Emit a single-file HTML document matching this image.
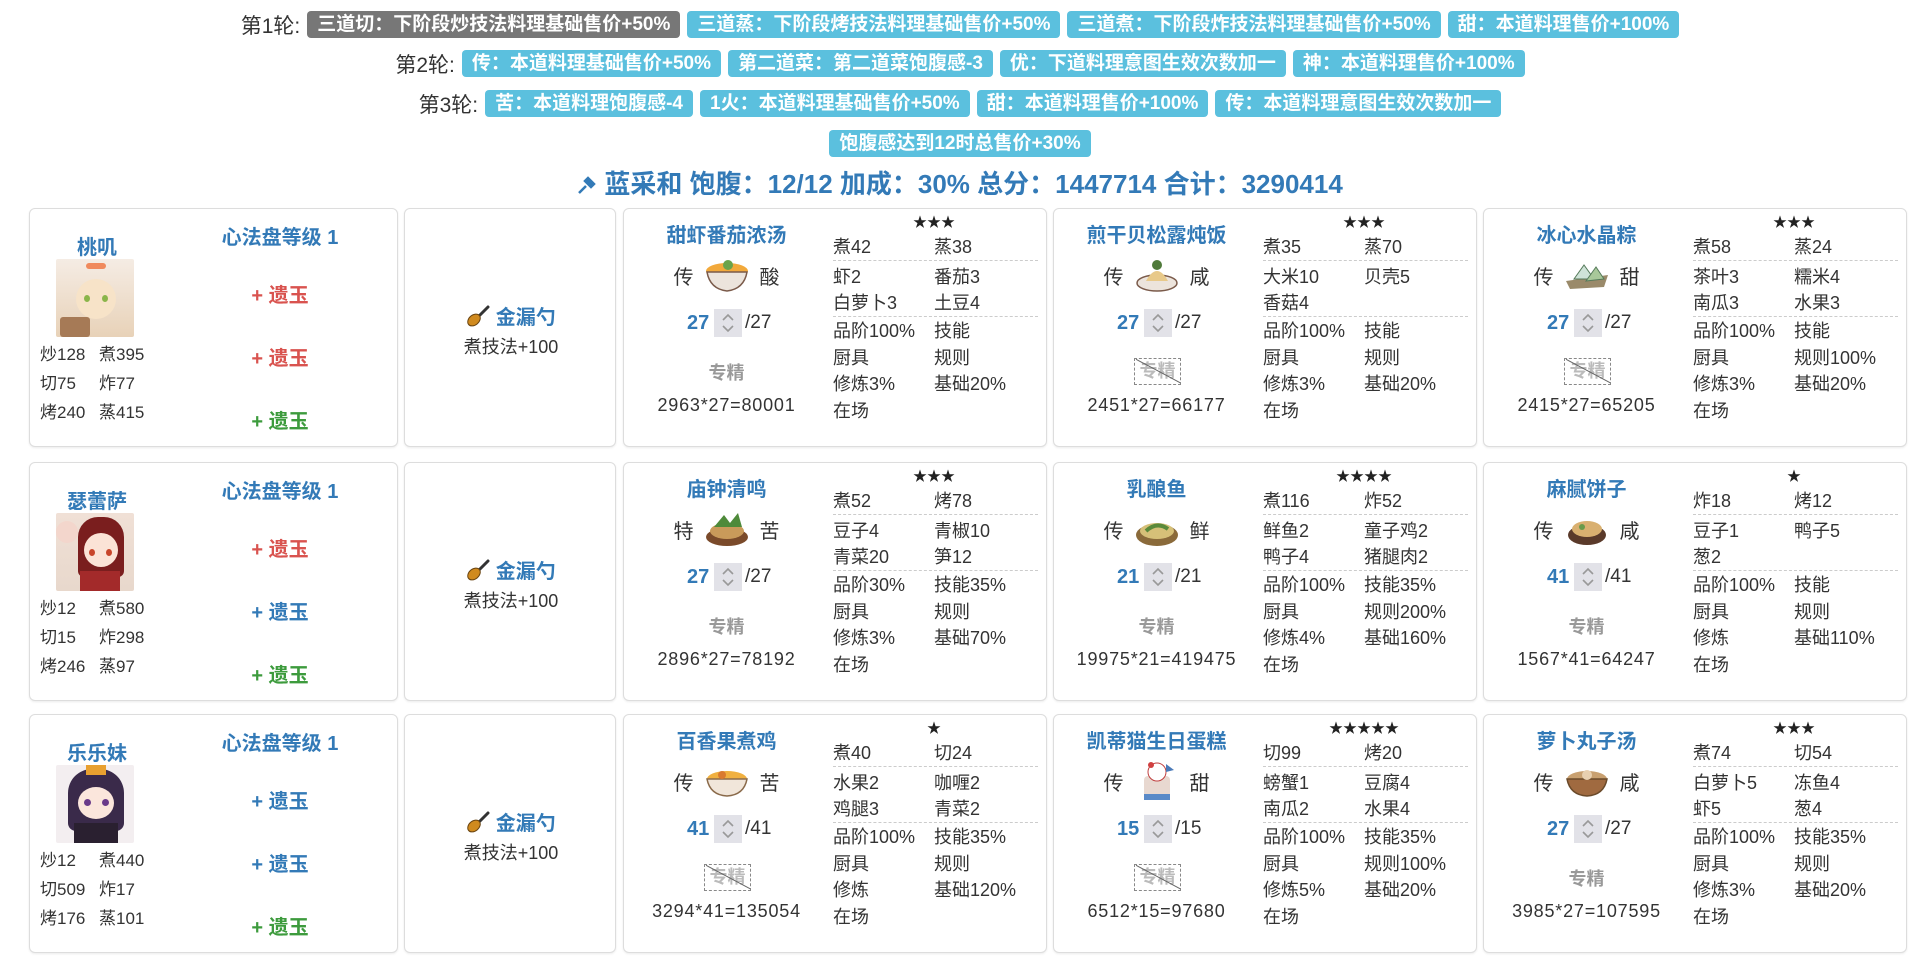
<!DOCTYPE html>
<html><head><meta charset="utf-8">
<style>
*{box-sizing:border-box;margin:0;padding:0}
body{width:1920px;height:970px;background:#fff;font-family:"Liberation Sans","Noto Sans CJK SC",sans-serif;color:#333;position:relative;overflow:hidden}
.tr{position:absolute;left:0;width:1920px;display:flex;justify-content:center;align-items:center;gap:7px;height:27px}
.lb{font-size:21px;color:#333}
.tg{background:#5bc0de;color:#fff;font-weight:bold;font-size:19px;height:27px;line-height:27px;padding:0 10px;border-radius:4px;white-space:nowrap}
.tg.g{background:#777}
.ttl{position:absolute;top:168px;left:0;width:1920px;text-align:center;font-size:26px;font-weight:bold;color:#337ab7;line-height:32px}
.card{position:absolute;border:1px solid #ddd;border-radius:6px;box-shadow:0 1px 2px rgba(0,0,0,.08);background:#fff}
.ch{width:369px;height:239px}
.eq{width:212px;height:239px}
.dc{width:424px;height:239px}
.a{position:absolute;white-space:nowrap}
.nm{font-size:20px;font-weight:bold;color:#337ab7;width:134px;text-align:center;left:0;top:20px}
.av{left:26px;top:50px;width:78px;height:78px;border-radius:2px}
.s{font-size:17px;line-height:22px}
.xf{left:150px;width:200px;text-align:center;font-size:20px;font-weight:bold;color:#337ab7;top:12px}
.yy{left:150px;width:200px;text-align:center;font-size:20px;font-weight:bold}
.r{color:#d9534f}.b{color:#337ab7}.gr{color:#3d9b3d}
.en{left:0;width:212px;text-align:center;top:92px;font-size:20px;font-weight:bold;color:#337ab7}
.ed{left:0;width:212px;text-align:center;top:124px;font-size:18px}
.dt{left:0;width:205px;text-align:center;top:10px;font-size:20px;font-weight:bold;color:#337ab7}
.fl{left:0;width:205px;top:44px;display:flex;justify-content:center;align-items:center;gap:10px;font-size:20px;height:44px}
.ct{left:63px;top:100px;display:flex;align-items:center;font-size:19px;height:28px}
.ct b{color:#337ab7;font-size:20px;width:27px}
.sp{width:28px;height:28px;background:#e2e2e8;margin-right:3px;display:flex;align-items:center;justify-content:center}
.zj{left:0;width:205px;text-align:center;top:150px;font-size:18px;font-weight:bold;color:#999}
.zx{left:80px;top:149px;width:47px;height:27px;border:1px dashed #888;font-size:18px;font-weight:bold;color:#bbb;text-align:center;line-height:25px;overflow:hidden}
.zx:after{content:"";position:absolute;left:-2px;top:12px;width:52px;border-top:1px solid #666;transform:rotate(28deg)}
.fm{left:0;width:205px;text-align:center;top:186px;font-size:18px;letter-spacing:0.8px}
.st{left:250px;width:120px;text-align:center;top:3px;font-size:14px;color:#222}
.c{font-size:18px;line-height:24px}
.c1{left:209px}.c2{left:310px}
.hl{position:absolute;left:209px;width:205px;border-top:1px dashed #ccc}
</style></head><body>

<div class="tr" style="top:11px"><span class="lb">第1轮:</span><span class="tg g">三道切：下阶段炒技法料理基础售价+50%</span><span class="tg">三道蒸：下阶段烤技法料理基础售价+50%</span><span class="tg">三道煮：下阶段炸技法料理基础售价+50%</span><span class="tg">甜：本道料理售价+100%</span></div>
<div class="tr" style="top:50px"><span class="lb">第2轮:</span><span class="tg">传：本道料理基础售价+50%</span><span class="tg">第二道菜：第二道菜饱腹感-3</span><span class="tg">优：下道料理意图生效次数加一</span><span class="tg">神：本道料理售价+100%</span></div>
<div class="tr" style="top:90px"><span class="lb">第3轮:</span><span class="tg">苦：本道料理饱腹感-4</span><span class="tg">1火：本道料理基础售价+50%</span><span class="tg">甜：本道料理售价+100%</span><span class="tg">传：本道料理意图生效次数加一</span></div>
<div class="tr" style="top:130px"><span class="tg">饱腹感达到12时总售价+30%</span></div>
<div class="ttl"><svg width="20" height="20" viewBox="0 0 20 20" style="vertical-align:-2px"><path d="M2 18 L9 11 M8 6 L14 12 M11 3 L17 9 L14 12 L8 6 Z" stroke="#337ab7" stroke-width="2.5" fill="#337ab7"/></svg> 蓝采和 饱腹：12/12 加成：30% 总分：1447714 合计：3290414</div>

<!-- ROW 1 -->
<div class="card ch" style="left:29px;top:208px">
<div class="a nm" style="top:22px">桃叽</div>
<div class="a av" style="background:linear-gradient(#f5ece4,#e8d2b8);"><div style="position:absolute;left:20px;top:20px;width:40px;height:40px;border-radius:50%;background:#f7e3c8"></div><div style="position:absolute;left:28px;top:36px;width:6px;height:7px;border-radius:50%;background:#8ab54a"></div><div style="position:absolute;left:46px;top:36px;width:6px;height:7px;border-radius:50%;background:#8ab54a"></div><div style="position:absolute;left:30px;top:4px;width:20px;height:6px;background:#f08a5d;border-radius:3px"></div><div style="position:absolute;left:4px;top:58px;width:30px;height:20px;background:#a67a56;border-radius:3px"></div></div>
<div class="a s" style="left:10px;top:135px">炒128</div><div class="a s" style="left:69px;top:135px">煮395</div>
<div class="a s" style="left:10px;top:164px">切75</div><div class="a s" style="left:69px;top:164px">炸77</div>
<div class="a s" style="left:10px;top:193px">烤240</div><div class="a s" style="left:69px;top:193px">蒸415</div>
<div class="a xf">心法盘等级 1</div>
<div class="a yy r" style="top:70px">+ 遗玉</div>
<div class="a yy r" style="top:133px">+ 遗玉</div>
<div class="a yy gr" style="top:196px">+ 遗玉</div>
</div>
<div class="card eq" style="left:404px;top:208px"><div class="a en"><svg width="24" height="22" viewBox="0 0 24 22" style="vertical-align:-3px"><path d="M22 2 L12 12" stroke="#333" stroke-width="3" stroke-linecap="round"/><ellipse cx="8" cy="15" rx="7" ry="5" transform="rotate(-40 8 15)" fill="#d08a1e" stroke="#6a4410"/></svg> 金漏勺</div><div class="a ed">煮技法+100</div></div>

<div class="card dc" style="left:623px;top:208px">
<div class="a dt">甜虾番茄浓汤</div>
<div class="a fl">传<svg width="46" height="40"><ellipse cx="23" cy="16" rx="21" ry="8" fill="#f2a93b"/><path d="M3 17 Q6 34 23 36 Q40 34 43 17 Z" fill="#ece4dc" stroke="#7a5a4a" stroke-width="1.5"/><circle cx="24" cy="10" r="5" fill="#6aa34a"/></svg>酸</div>
<div class="a ct"><b>27</b><span class="sp"><svg width="14" height="22"><path d="M2 8 L7 3 L12 8 M2 14 L7 19 L12 14" fill="none" stroke="#999" stroke-width="1.6"/></svg></span>/27</div>
<div class="a zj">专精</div>
<div class="a fm">2963*27=80001</div>
<div class="a st">★★★</div>
<div class="a c c1" style="top:26px">煮42</div><div class="a c c2" style="top:26px">蒸38</div>
<div class="hl" style="top:51px"></div>
<div class="a c c1" style="top:56px">虾2</div><div class="a c c2" style="top:56px">番茄3</div>
<div class="a c c1" style="top:82px">白萝卜3</div><div class="a c c2" style="top:82px">土豆4</div>
<div class="hl" style="top:107px"></div>
<div class="a c c1" style="top:110px">品阶100%</div><div class="a c c2" style="top:110px">技能</div>
<div class="a c c1" style="top:137px">厨具</div><div class="a c c2" style="top:137px">规则</div>
<div class="a c c1" style="top:163px">修炼3%</div><div class="a c c2" style="top:163px">基础20%</div>
<div class="a c c1" style="top:190px">在场</div>
</div>

<div class="card dc" style="left:1053px;top:208px">
<div class="a dt">煎干贝松露炖饭</div>
<div class="a fl">传<svg width="46" height="40"><ellipse cx="23" cy="28" rx="20" ry="8" fill="#ece4dc" stroke="#7a5a4a" stroke-width="1.5"/><path d="M12 26 Q23 6 34 26 Z" fill="#e8c98a"/><circle cx="23" cy="10" r="5" fill="#4f7a3a"/></svg>咸</div>
<div class="a ct"><b>27</b><span class="sp"><svg width="14" height="22"><path d="M2 8 L7 3 L12 8 M2 14 L7 19 L12 14" fill="none" stroke="#999" stroke-width="1.6"/></svg></span>/27</div>
<div class="a zx">专精</div>
<div class="a fm">2451*27=66177</div>
<div class="a st">★★★</div>
<div class="a c c1" style="top:26px">煮35</div><div class="a c c2" style="top:26px">蒸70</div>
<div class="hl" style="top:51px"></div>
<div class="a c c1" style="top:56px">大米10</div><div class="a c c2" style="top:56px">贝壳5</div>
<div class="a c c1" style="top:82px">香菇4</div>
<div class="hl" style="top:107px"></div>
<div class="a c c1" style="top:110px">品阶100%</div><div class="a c c2" style="top:110px">技能</div>
<div class="a c c1" style="top:137px">厨具</div><div class="a c c2" style="top:137px">规则</div>
<div class="a c c1" style="top:163px">修炼3%</div><div class="a c c2" style="top:163px">基础20%</div>
<div class="a c c1" style="top:190px">在场</div>
</div>

<div class="card dc" style="left:1483px;top:208px">
<div class="a dt">冰心水晶粽</div>
<div class="a fl">传<svg width="46" height="40"><path d="M2 26 L44 20 L40 32 L6 34 Z" fill="#9a8a6a"/><path d="M10 24 L20 10 L30 24 Z" fill="#cfe3d8" stroke="#557a5a"/><path d="M22 26 L32 12 L40 24 Z" fill="#a8c89a" stroke="#557a5a"/></svg>甜</div>
<div class="a ct"><b>27</b><span class="sp"><svg width="14" height="22"><path d="M2 8 L7 3 L12 8 M2 14 L7 19 L12 14" fill="none" stroke="#999" stroke-width="1.6"/></svg></span>/27</div>
<div class="a zx">专精</div>
<div class="a fm">2415*27=65205</div>
<div class="a st">★★★</div>
<div class="a c c1" style="top:26px">煮58</div><div class="a c c2" style="top:26px">蒸24</div>
<div class="hl" style="top:51px"></div>
<div class="a c c1" style="top:56px">茶叶3</div><div class="a c c2" style="top:56px">糯米4</div>
<div class="a c c1" style="top:82px">南瓜3</div><div class="a c c2" style="top:82px">水果3</div>
<div class="hl" style="top:107px"></div>
<div class="a c c1" style="top:110px">品阶100%</div><div class="a c c2" style="top:110px">技能</div>
<div class="a c c1" style="top:137px">厨具</div><div class="a c c2" style="top:137px">规则100%</div>
<div class="a c c1" style="top:163px">修炼3%</div><div class="a c c2" style="top:163px">基础20%</div>
<div class="a c c1" style="top:190px">在场</div>
</div>

<!-- ROW 2 -->
<div class="card ch" style="left:29px;top:462px">
<div class="a nm" style="top:22px">瑟蕾萨</div>
<div class="a av" style="background:linear-gradient(#f0e0d6,#e8d8cc)"><div style="position:absolute;left:22px;top:4px;width:46px;height:60px;border-radius:20px 20px 6px 6px;background:#7a1e1e"></div><div style="position:absolute;left:28px;top:20px;width:34px;height:34px;border-radius:50%;background:#fbe3d6"></div><div style="position:absolute;left:33px;top:36px;width:6px;height:7px;border-radius:50%;background:#c8452a"></div><div style="position:absolute;left:50px;top:36px;width:6px;height:7px;border-radius:50%;background:#c8452a"></div><div style="position:absolute;left:24px;top:58px;width:40px;height:20px;background:#a32a2a"></div><div style="position:absolute;left:0;top:8px;width:22px;height:22px;border-radius:50%;background:#f3d6cc"></div></div>
<div class="a s" style="left:10px;top:135px">炒12</div><div class="a s" style="left:69px;top:135px">煮580</div>
<div class="a s" style="left:10px;top:164px">切15</div><div class="a s" style="left:69px;top:164px">炸298</div>
<div class="a s" style="left:10px;top:193px">烤246</div><div class="a s" style="left:69px;top:193px">蒸97</div>
<div class="a xf">心法盘等级 1</div>
<div class="a yy r" style="top:70px">+ 遗玉</div>
<div class="a yy b" style="top:133px">+ 遗玉</div>
<div class="a yy gr" style="top:196px">+ 遗玉</div>
</div>
<div class="card eq" style="left:404px;top:462px"><div class="a en"><svg width="24" height="22" viewBox="0 0 24 22" style="vertical-align:-3px"><path d="M22 2 L12 12" stroke="#333" stroke-width="3" stroke-linecap="round"/><ellipse cx="8" cy="15" rx="7" ry="5" transform="rotate(-40 8 15)" fill="#d08a1e" stroke="#6a4410"/></svg> 金漏勺</div><div class="a ed">煮技法+100</div></div>

<div class="card dc" style="left:623px;top:462px">
<div class="a dt">庙钟清鸣</div>
<div class="a fl">特<svg width="46" height="40"><ellipse cx="23" cy="28" rx="21" ry="9" fill="#7a4a2a"/><ellipse cx="23" cy="22" rx="17" ry="8" fill="#c99a5a"/><path d="M10 18 L20 6 L26 14 L34 4 L38 18 Z" fill="#4e8a3a"/></svg>苦</div>
<div class="a ct"><b>27</b><span class="sp"><svg width="14" height="22"><path d="M2 8 L7 3 L12 8 M2 14 L7 19 L12 14" fill="none" stroke="#999" stroke-width="1.6"/></svg></span>/27</div>
<div class="a zj">专精</div>
<div class="a fm">2896*27=78192</div>
<div class="a st">★★★</div>
<div class="a c c1" style="top:26px">煮52</div><div class="a c c2" style="top:26px">烤78</div>
<div class="hl" style="top:51px"></div>
<div class="a c c1" style="top:56px">豆子4</div><div class="a c c2" style="top:56px">青椒10</div>
<div class="a c c1" style="top:82px">青菜20</div><div class="a c c2" style="top:82px">笋12</div>
<div class="hl" style="top:107px"></div>
<div class="a c c1" style="top:110px">品阶30%</div><div class="a c c2" style="top:110px">技能35%</div>
<div class="a c c1" style="top:137px">厨具</div><div class="a c c2" style="top:137px">规则</div>
<div class="a c c1" style="top:163px">修炼3%</div><div class="a c c2" style="top:163px">基础70%</div>
<div class="a c c1" style="top:190px">在场</div>
</div>

<div class="card dc" style="left:1053px;top:462px">
<div class="a dt">乳酿鱼</div>
<div class="a fl">传<svg width="46" height="40"><ellipse cx="23" cy="26" rx="21" ry="11" fill="#8a6a3a"/><ellipse cx="23" cy="22" rx="17" ry="8" fill="#d6c078"/><path d="M12 22 Q23 12 34 20" stroke="#5a8a3a" stroke-width="4" fill="none"/></svg>鲜</div>
<div class="a ct"><b>21</b><span class="sp"><svg width="14" height="22"><path d="M2 8 L7 3 L12 8 M2 14 L7 19 L12 14" fill="none" stroke="#999" stroke-width="1.6"/></svg></span>/21</div>
<div class="a zj">专精</div>
<div class="a fm">19975*21=419475</div>
<div class="a st">★★★★</div>
<div class="a c c1" style="top:26px">煮116</div><div class="a c c2" style="top:26px">炸52</div>
<div class="hl" style="top:51px"></div>
<div class="a c c1" style="top:56px">鲜鱼2</div><div class="a c c2" style="top:56px">童子鸡2</div>
<div class="a c c1" style="top:82px">鸭子4</div><div class="a c c2" style="top:82px">猪腿肉2</div>
<div class="hl" style="top:107px"></div>
<div class="a c c1" style="top:110px">品阶100%</div><div class="a c c2" style="top:110px">技能35%</div>
<div class="a c c1" style="top:137px">厨具</div><div class="a c c2" style="top:137px">规则200%</div>
<div class="a c c1" style="top:163px">修炼4%</div><div class="a c c2" style="top:163px">基础160%</div>
<div class="a c c1" style="top:190px">在场</div>
</div>

<div class="card dc" style="left:1483px;top:462px">
<div class="a dt">麻腻饼子</div>
<div class="a fl">传<svg width="46" height="40"><ellipse cx="23" cy="26" rx="19" ry="10" fill="#5a3a2a"/><ellipse cx="23" cy="20" rx="15" ry="8" fill="#d9b070"/><circle cx="18" cy="18" r="3" fill="#6a9a4a"/></svg>咸</div>
<div class="a ct"><b>41</b><span class="sp"><svg width="14" height="22"><path d="M2 8 L7 3 L12 8 M2 14 L7 19 L12 14" fill="none" stroke="#999" stroke-width="1.6"/></svg></span>/41</div>
<div class="a zj">专精</div>
<div class="a fm">1567*41=64247</div>
<div class="a st">★</div>
<div class="a c c1" style="top:26px">炸18</div><div class="a c c2" style="top:26px">烤12</div>
<div class="hl" style="top:51px"></div>
<div class="a c c1" style="top:56px">豆子1</div><div class="a c c2" style="top:56px">鸭子5</div>
<div class="a c c1" style="top:82px">葱2</div>
<div class="hl" style="top:107px"></div>
<div class="a c c1" style="top:110px">品阶100%</div><div class="a c c2" style="top:110px">技能</div>
<div class="a c c1" style="top:137px">厨具</div><div class="a c c2" style="top:137px">规则</div>
<div class="a c c1" style="top:163px">修炼</div><div class="a c c2" style="top:163px">基础110%</div>
<div class="a c c1" style="top:190px">在场</div>
</div>

<!-- ROW 3 -->
<div class="card ch" style="left:29px;top:714px">
<div class="a nm" style="top:22px">乐乐妹</div>
<div class="a av" style="background:#f3eef0"><div style="position:absolute;left:12px;top:4px;width:56px;height:62px;border-radius:24px 24px 8px 8px;background:#3a2a4a"></div><div style="position:absolute;left:22px;top:22px;width:36px;height:32px;border-radius:50%;background:#fbe6dc"></div><div style="position:absolute;left:28px;top:34px;width:7px;height:7px;border-radius:50%;background:#6a3a8a"></div><div style="position:absolute;left:46px;top:34px;width:7px;height:7px;border-radius:50%;background:#6a3a8a"></div><div style="position:absolute;left:18px;top:58px;width:44px;height:20px;background:#2a2030"></div><div style="position:absolute;left:30px;top:0;width:20px;height:10px;background:#e8a030"></div></div>
<div class="a s" style="left:10px;top:135px">炒12</div><div class="a s" style="left:69px;top:135px">煮440</div>
<div class="a s" style="left:10px;top:164px">切509</div><div class="a s" style="left:69px;top:164px">炸17</div>
<div class="a s" style="left:10px;top:193px">烤176</div><div class="a s" style="left:69px;top:193px">蒸101</div>
<div class="a xf">心法盘等级 1</div>
<div class="a yy b" style="top:70px">+ 遗玉</div>
<div class="a yy b" style="top:133px">+ 遗玉</div>
<div class="a yy gr" style="top:196px">+ 遗玉</div>
</div>
<div class="card eq" style="left:404px;top:714px"><div class="a en"><svg width="24" height="22" viewBox="0 0 24 22" style="vertical-align:-3px"><path d="M22 2 L12 12" stroke="#333" stroke-width="3" stroke-linecap="round"/><ellipse cx="8" cy="15" rx="7" ry="5" transform="rotate(-40 8 15)" fill="#d08a1e" stroke="#6a4410"/></svg> 金漏勺</div><div class="a ed">煮技法+100</div></div>

<div class="card dc" style="left:623px;top:714px">
<div class="a dt">百香果煮鸡</div>
<div class="a fl">传<svg width="46" height="40"><ellipse cx="23" cy="18" rx="20" ry="8" fill="#f0b040"/><path d="M3 18 Q6 34 23 35 Q40 34 43 18 Z" fill="#f1e6da" stroke="#8a6a4a" stroke-width="1.5"/><circle cx="18" cy="14" r="4" fill="#d97a30"/></svg>苦</div>
<div class="a ct"><b>41</b><span class="sp"><svg width="14" height="22"><path d="M2 8 L7 3 L12 8 M2 14 L7 19 L12 14" fill="none" stroke="#999" stroke-width="1.6"/></svg></span>/41</div>
<div class="a zx">专精</div>
<div class="a fm">3294*41=135054</div>
<div class="a st">★</div>
<div class="a c c1" style="top:26px">煮40</div><div class="a c c2" style="top:26px">切24</div>
<div class="hl" style="top:51px"></div>
<div class="a c c1" style="top:56px">水果2</div><div class="a c c2" style="top:56px">咖喱2</div>
<div class="a c c1" style="top:82px">鸡腿3</div><div class="a c c2" style="top:82px">青菜2</div>
<div class="hl" style="top:107px"></div>
<div class="a c c1" style="top:110px">品阶100%</div><div class="a c c2" style="top:110px">技能35%</div>
<div class="a c c1" style="top:137px">厨具</div><div class="a c c2" style="top:137px">规则</div>
<div class="a c c1" style="top:163px">修炼</div><div class="a c c2" style="top:163px">基础120%</div>
<div class="a c c1" style="top:190px">在场</div>
</div>

<div class="card dc" style="left:1053px;top:714px">
<div class="a dt">凯蒂猫生日蛋糕</div>
<div class="a fl">传<svg width="46" height="42"><rect x="10" y="16" width="26" height="24" rx="4" fill="#e8d8d0"/><path d="M10 34 L36 34 L36 40 L10 40 Z" fill="#5a8ac8"/><circle cx="23" cy="12" r="9" fill="#fff" stroke="#c04040"/><circle cx="17" cy="5" r="3" fill="#d04040"/><path d="M32 4 L40 10 L32 12 Z" fill="#4a7ab8"/></svg>甜</div>
<div class="a ct"><b>15</b><span class="sp"><svg width="14" height="22"><path d="M2 8 L7 3 L12 8 M2 14 L7 19 L12 14" fill="none" stroke="#999" stroke-width="1.6"/></svg></span>/15</div>
<div class="a zx">专精</div>
<div class="a fm">6512*15=97680</div>
<div class="a st">★★★★★</div>
<div class="a c c1" style="top:26px">切99</div><div class="a c c2" style="top:26px">烤20</div>
<div class="hl" style="top:51px"></div>
<div class="a c c1" style="top:56px">螃蟹1</div><div class="a c c2" style="top:56px">豆腐4</div>
<div class="a c c1" style="top:82px">南瓜2</div><div class="a c c2" style="top:82px">水果4</div>
<div class="hl" style="top:107px"></div>
<div class="a c c1" style="top:110px">品阶100%</div><div class="a c c2" style="top:110px">技能35%</div>
<div class="a c c1" style="top:137px">厨具</div><div class="a c c2" style="top:137px">规则100%</div>
<div class="a c c1" style="top:163px">修炼5%</div><div class="a c c2" style="top:163px">基础20%</div>
<div class="a c c1" style="top:190px">在场</div>
</div>

<div class="card dc" style="left:1483px;top:714px">
<div class="a dt">萝卜丸子汤</div>
<div class="a fl">传<svg width="46" height="40"><ellipse cx="23" cy="18" rx="20" ry="8" fill="#c8a070"/><path d="M3 18 Q6 34 23 35 Q40 34 43 18 Z" fill="#a06a40" stroke="#6a4a2a" stroke-width="1.5"/><circle cx="23" cy="14" r="5" fill="#e8d0b0"/></svg>咸</div>
<div class="a ct"><b>27</b><span class="sp"><svg width="14" height="22"><path d="M2 8 L7 3 L12 8 M2 14 L7 19 L12 14" fill="none" stroke="#999" stroke-width="1.6"/></svg></span>/27</div>
<div class="a zj">专精</div>
<div class="a fm">3985*27=107595</div>
<div class="a st">★★★</div>
<div class="a c c1" style="top:26px">煮74</div><div class="a c c2" style="top:26px">切54</div>
<div class="hl" style="top:51px"></div>
<div class="a c c1" style="top:56px">白萝卜5</div><div class="a c c2" style="top:56px">冻鱼4</div>
<div class="a c c1" style="top:82px">虾5</div><div class="a c c2" style="top:82px">葱4</div>
<div class="hl" style="top:107px"></div>
<div class="a c c1" style="top:110px">品阶100%</div><div class="a c c2" style="top:110px">技能35%</div>
<div class="a c c1" style="top:137px">厨具</div><div class="a c c2" style="top:137px">规则</div>
<div class="a c c1" style="top:163px">修炼3%</div><div class="a c c2" style="top:163px">基础20%</div>
<div class="a c c1" style="top:190px">在场</div>
</div>

</body></html>
